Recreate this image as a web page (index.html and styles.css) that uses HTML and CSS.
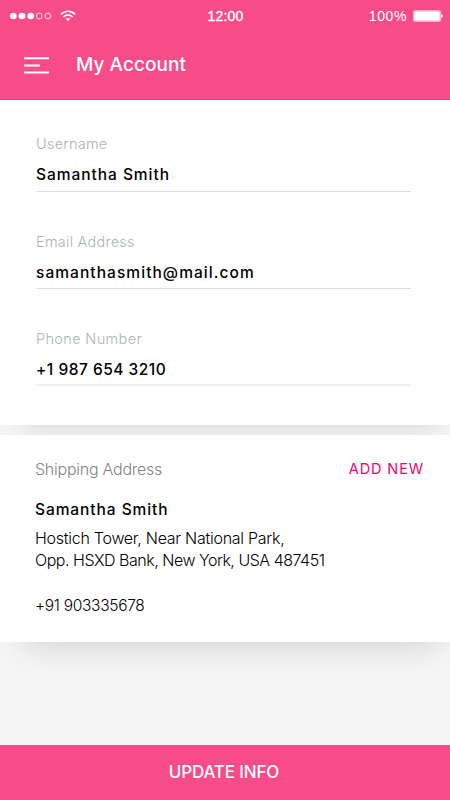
FILE: index.html
```html
<!DOCTYPE html>
<html lang="en">
<head>
<meta charset="utf-8">
<title>My Account</title>
<link rel="stylesheet" href="styles.css">
</head>
<body>
<div class="screen">
  <header class="header">
    <div class="status">
      <div class="status-left">
        <svg class="signal" width="42" height="8" viewBox="0 0 42 8">
          <g fill="#fff"><circle cx="3.3" cy="4" r="3.3"/><circle cx="12" cy="4" r="3.3"/><circle cx="20.7" cy="4" r="3.3"/></g>
          <g fill="none" stroke="#fff" stroke-width=".8"><circle cx="29.3" cy="4" r="2.9"/><circle cx="38" cy="4" r="2.9"/></g>
        </svg>
        <svg class="wifi" width="16" height="12" viewBox="0 0 16 12">
          <g fill="none" stroke="#fff" stroke-width="1.6"><path d="M.9 4.4C4.9.1 11.1.1 15.1 4.4"/><path d="M3.5 7C6 4.2 10 4.2 12.5 7"/></g>
          <path fill="#fff" d="M5.8 8.8Q8 7 10.2 8.8L8 11.2Z"/>
        </svg>
      </div>
      <span class="time">12:00</span>
      <div class="status-right">
        <span class="percent">100%</span>
        <svg class="battery" width="30" height="12" viewBox="0 0 30 12">
          <rect x=".7" y=".7" width="26.6" height="10.6" rx="1.6" fill="#fff" stroke="#fbb0cd" stroke-width="1.4"/>
          <path fill="#fff" d="M28.2 3.8Q29.8 4.6 29.8 6T28.2 8.2Z"/>
        </svg>
      </div>
    </div>
    <div class="appbar">
      <svg class="menu" width="25" height="17" viewBox="0 0 25 17">
        <path stroke="#fff" stroke-width="2" d="M0 1.3H25M0 8.5H16M0 15.6H25"/>
      </svg>
      <h1 class="title">My Account</h1>
    </div>
  </header>
  <main class="content">
    <section class="card account">
      <div class="field"><div class="label l-user">Username</div><div class="value v-user">Samantha Smith</div></div>
      <div class="field field-mail"><div class="label l-mail">Email Address</div><div class="value v-mail">samanthasmith@mail.com</div></div>
      <div class="field field-last"><div class="label l-phone">Phone Number</div><div class="value v-phone">+1 987 654 3210</div></div>
    </section>
    <section class="card shipping">
      <div class="shipping-head"><h2 class="shipping-title">Shipping Address</h2><a class="add">ADD NEW</a></div>
      <div class="name">Samantha Smith</div>
      <div class="address"><div class="line1">Hostich Tower, Near National Park,</div><div class="line2">Opp. HSXD Bank, New York, USA 487451</div></div>
      <div class="phone">+91 903335678</div>
    </section>
  </main>
  <button class="update"><span>UPDATE INFO</span></button>
</div>
</body>
</html>
```
FILE: styles.css
```css
* { box-sizing: border-box; margin: 0; padding: 0; }
body { width: 450px; height: 800px; overflow: hidden; font-family: Inter, "Liberation Sans", sans-serif; white-space: nowrap; }
.screen { height: 800px; display: flex; flex-direction: column; background: #f5f5f5; }
.header { height: 100px; flex: none; background: #f84b8a; color: #fff; border-bottom: 1px solid #ee4580; }
.status { height: 32px; padding: 0 7px 0 10px; display: grid; grid-template-columns: 1fr auto 1fr; align-items: center; font-family: "Liberation Sans", sans-serif; font-size: 14px; letter-spacing: .2px; }
.status-left { display: flex; align-items: center; gap: 8px; }
.status-right { display: flex; align-items: center; justify-content: flex-end; gap: 6px; }
.time { margin-left: -2px; -webkit-text-stroke: .3px #fff; }
.percent { letter-spacing: .6px; }
.appbar { height: 66px; padding-left: 24px; display: flex; align-items: center; gap: 27px; }
.title { font-size: 19px; font-weight: 500; line-height: 24px; letter-spacing: .05px; }
.content { flex: 1; display: flex; flex-direction: column; gap: 10px; }
.card { background: #fff; }
.account { height: 325px; padding: 34px 39px 0 36px; border-radius: 0 0 3px 0; box-shadow: 6px 20px 28px -18px rgba(0,0,0,.13); }
.field { height: 58px; margin-bottom: 40px; border-bottom: 1px solid #dcdedd; }
.field-mail { height: 57px; }
.field-last { height: 57px; border-bottom: 2px solid #efefef; }
.label { height: 20px; line-height: 20px; font-size: 14.5px; font-weight: 350; color: #a5b8b3; letter-spacing: .25px; }
.l-phone { letter-spacing: .35px; }
.value { height: 20px; margin-top: 11px; line-height: 20px; font-size: 15.5px; font-weight: 480; color: #000; letter-spacing: .96px; }
.v-mail { letter-spacing: 1.06px; }
.v-phone { letter-spacing: .5px; }
.shipping { height: 207px; padding: 23px 26px 0 35px; box-shadow: 6px 20px 32px -18px rgba(0,0,0,.16); }
.shipping-head { height: 22px; display: flex; justify-content: space-between; align-items: center; }
.shipping-title { font-size: 16px; font-weight: 300; color: #858585; letter-spacing: -.25px; }
.add { font-size: 14.5px; color: #f5006f; letter-spacing: .9px; position: relative; top: -1px; }
.name { height: 22px; margin-top: 19px; line-height: 22px; font-size: 15.5px; font-weight: 500; letter-spacing: .93px; }
.address { margin-top: 6px; font-size: 16px; font-weight: 300; line-height: 22px; }
.line1 { letter-spacing: -.27px; }
.line2 { letter-spacing: -.48px; }
.phone { height: 22px; margin-top: 24px; line-height: 22px; font-size: 15.5px; font-weight: 300; letter-spacing: -.3px; }
.update { height: 55px; flex: none; border: 0; background: #f84b8a; color: #fff; font: 500 17px/24px Inter, "Liberation Sans", sans-serif; letter-spacing: -.15px; display: flex; justify-content: center; align-items: center; padding: 0 2px 2px 0; }
```
